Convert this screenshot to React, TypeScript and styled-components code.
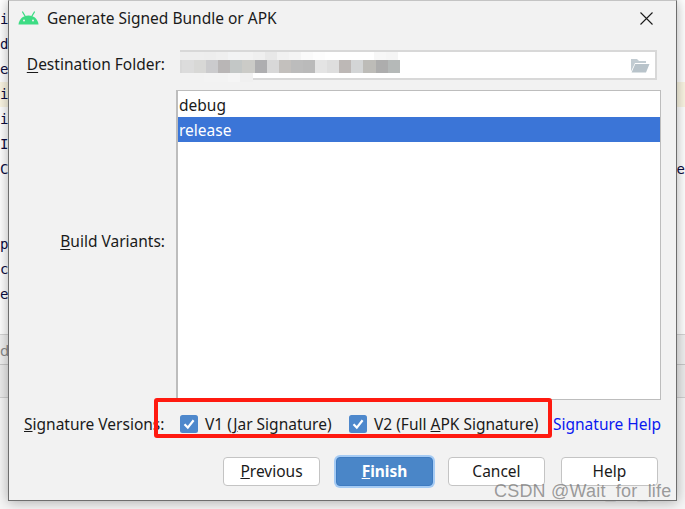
import React from "react";
import styled, { createGlobalStyle } from "styled-components";

const GlobalStyle = createGlobalStyle`
  html, body {
    margin: 0;
    padding: 0;
    background: #ffffff;
  }
`;

const uiFont = `"Noto Sans", "Open Sans", "Liberation Sans", sans-serif`;

const Screen = styled.div`
  position: relative;
  width: 685px;
  height: 509px;
  overflow: hidden;
  background: #ffffff;
  font-family: ${uiFont};
`;

/* the IDE behind the dialog */
const Backdrop = styled.div`
  display: flex;
  flex-direction: column;
  height: 100%;
`;

const Editor = styled.div`
  height: 334px;
  padding-top: 7px;
  box-sizing: border-box;
  background: #ffffff;
`;

const CodeLine = styled.div<{ $current?: boolean }>`
  height: 25px;
  line-height: 25px;
  font-family: "DejaVu Sans Mono", monospace;
  font-size: 14px;
  color: #0c0c40;
  background: ${(p) => (p.$current ? "#fbf6e3" : "transparent")};
  display: flex;
  justify-content: space-between;
`;

const Tabs = styled.div`
  height: 31px;
  background: #f0f0f0;
  border-top: 1px solid #d4d4d4;
  border-bottom: 1px solid #c8c8c8;
  line-height: 30px;
  font-size: 15px;
  color: #888888;
  box-sizing: border-box;
`;

const Toolbar = styled.div`
  height: 33px;
  background: #ececec;
  border-bottom: 1px solid #d0d0d0;
  box-sizing: border-box;
`;

const StatusArea = styled.div`
  flex: 1;
  background: #f6f6f6;
`;

const Dialog = styled.div`
  position: absolute;
  left: 8px;
  top: 0;
  width: 669px;
  height: 501px;
  box-sizing: border-box;
  background: #f2f2f2;
  border: 1px solid #6e6e6e;
  border-top-color: #c4c4c4;
  box-shadow: 0 1px 12px rgba(0, 0, 0, 0.32);
  display: flex;
  flex-direction: column;
  color: #1a1a1a;
`;

const TitleBar = styled.div`
  height: 38px;
  display: flex;
  align-items: center;
  padding: 0 23px 4px 9px;
  box-sizing: border-box;
  gap: 8px;
`;

const Title = styled.div`
  flex: 1;
  font-size: 15.5px;
  color: #1a1a1a;
`;

const Form = styled.div`
  display: grid;
  grid-template-columns: 156px 1fr;
  grid-template-rows: 30px 1fr;
  column-gap: 11px;
  row-gap: 10px;
  height: 361px;
  padding: 11px 15px 0 0;
  box-sizing: border-box;
`;

const Label = styled.label`
  font-size: 15.5px;
  color: #1a1a1a;
  text-align: right;
  align-self: center;
  white-space: nowrap;
  padding-bottom: 2px;
  u {
    text-underline-offset: 2px;
  }
`;

const BuildLabel = styled(Label)`
  padding-bottom: 8px;
`;

const PathField = styled.div`
  position: relative;
  margin: 0 4px 0 4px;
  border: 2px solid #d8d8d8;
  background: #ffffff;
  display: flex;
  align-items: center;
  justify-content: flex-end;
  padding-right: 5px;
`;

/* the pixelated patch that hides the path, it lies over the field */
const Blur = styled.div`
  position: absolute;
  left: -2px;
  top: 0;
  display: flex;
  flex-direction: column;
`;

const BlurRow = styled.div<{ $height: number; $indent: number }>`
  display: flex;
  height: ${(p) => p.$height}px;
  padding-left: ${(p) => p.$indent}px;
`;

const BlurCell = styled.span<{ $color: string }>`
  width: 12.1px;
  background: ${(p) => p.$color};
`;

const VariantList = styled.ul`
  list-style: none;
  margin: 0;
  padding: 1px 0 0;
  background: #ffffff;
  border: 1px solid #bdbdbd;
  border-left-width: 2px;
  font-size: 15.5px;
`;

const VariantRow = styled.li<{ $selected?: boolean }>`
  height: 25px;
  line-height: 27px;
  padding-left: 1px;
  background: ${(p) => (p.$selected ? "#3b75d7" : "transparent")};
  color: ${(p) => (p.$selected ? "#ffffff" : "#1a1a1a")};
`;

const SignatureRow = styled.div`
  height: 46px;
  display: flex;
  align-items: center;
  padding-left: 15px;
  margin-top: 1px;
  font-size: 15.5px;
`;

const SignatureLabel = styled.span`
  width: 156px;
  white-space: nowrap;
`;

const CheckOption = styled.span<{ $width: number }>`
  width: ${(p) => p.$width}px;
  display: flex;
  align-items: center;
  gap: 7px;
  white-space: nowrap;
`;

const CheckBox = styled.svg`
  width: 18px;
  height: 18px;
  flex: none;
  margin-top: -1px;
`;

const HelpLink = styled.a`
  color: #0a19f0;
  white-space: nowrap;
`;

const Buttons = styled.div`
  display: flex;
  justify-content: flex-end;
  gap: 16px;
  padding: 10px 18px 0 0;
`;

const DialogButton = styled.button<{ $primary?: boolean }>`
  width: 97px;
  height: 29px;
  margin: 0 ${(p) => (p.$primary ? "-1px" : "0")} 0 0;
  padding: 0 0 2px;
  border-radius: 4px;
  font-family: ${uiFont};
  font-size: 15.5px;
  border: 1px solid ${(p) => (p.$primary ? "#3f7cc1" : "#c4c4c4")};
  background: ${(p) => (p.$primary ? "#4a86c8" : "#ffffff")};
  color: ${(p) => (p.$primary ? "#ffffff" : "#1a1a1a")};
  font-weight: ${(p) => (p.$primary ? 700 : 400)};
  box-shadow: ${(p) => (p.$primary ? "0 0 0 2px #a5cbf4" : "none")};
`;

const RedBox = styled.div`
  position: absolute;
  left: 154px;
  top: 398px;
  width: 398px;
  height: 40px;
  box-sizing: border-box;
  border: 4px solid #ff1a10;
  border-radius: 3px;
  pointer-events: none;
`;

const Watermark = styled.div`
  position: absolute;
  left: 494px;
  top: 481px;
  font-family: "Liberation Sans", sans-serif;
  font-size: 18px;
  letter-spacing: 0.2px;
  color: rgba(110, 110, 110, 0.68);
  white-space: nowrap;
`;

const AndroidLogo = () => (
  <svg width="21" height="14" viewBox="0 0 21 14" style={{ flex: "none" }}>
    <path d="M0.5 13.5C1 8.5 4.8 4.6 10.5 4.6S20 8.5 20.5 13.5Z" fill="#3ddc84" />
    <path d="M4.6 1 7 5M16.4 1 14 5" stroke="#3ddc84" strokeWidth="1.3" strokeLinecap="round" />
    <circle cx="6" cy="9.6" r="1" fill="#f2f2f2" />
    <circle cx="15" cy="9.6" r="1" fill="#f2f2f2" />
  </svg>
);

const CloseIcon = () => (
  <svg width="13" height="13" viewBox="0 0 13 13">
    <path d="M.5.5l12 12M12.5.5l-12 12" stroke="#1a1a1a" strokeWidth="1.1" fill="none" />
  </svg>
);

const FolderIcon = () => (
  <svg width="20" height="15" viewBox="0 0 20 15">
    <path d="M1 13.5V1h6l2 2h7v2H5L1 13.5Z" fill="#c2ccd2" />
    <path d="M5.2 6H19.5L16 14.5H1.6Z" fill="#b8c3ca" />
  </svg>
);

const Check = () => (
  <CheckBox viewBox="0 0 18 18">
    <rect width="18" height="18" rx="2.5" fill="#4e88cc" />
    <path d="M4.5 9.2 7.8 12.6 13.6 5.2" stroke="#ffffff" strokeWidth="2.2" fill="none" />
  </CheckBox>
);

const blurTop = [
  "#eeeeee", "#eeeeee", "#ededed", "#efefef", "#f2f3f4", "#f2f2f2", "#efefef", "#e8e8e8", "#f1f1f1", "#f4f4f4",
  "#fafafa", "#fdfdfd", "#ffffff", "#ffffff", "#ffffff", "#ffffff", "#f7f7f7", "#f5f5f5",
];
const blurMain = [
  "#dcdcdc", "#d8d8d6", "#cbcbcd", "#b9b6b6", "#c3c7c6", "#cbcbc7", "#aeaeb0", "#d8d8d8", "#c3c0bd", "#bcbcbc",
  "#bababa", "#e4e4e4", "#dedede", "#bdb8b6", "#d3d5d6", "#bdbcb8", "#adadad", "#b5b9b8",
];
const blurBottom = ["#f2f2f2", "#f2f2f2", "#f3f3f3", "#f3f3f3", "#f5f5f5", "#f0f0f0"];

const leftChars = ["i", "d", "e", "i", "i", "I", "C", "", "", "p", "c", "e"];

export default function App() {
  return (
    <Screen>
      <GlobalStyle />
      <Backdrop>
        <Editor>
          {leftChars.map((c, i) => (
            <CodeLine key={i} $current={i === 3}>
              <span>{c}</span>
              <span>{i === 6 ? "e" : ""}</span>
            </CodeLine>
          ))}
        </Editor>
        <Tabs>de</Tabs>
        <Toolbar />
        <StatusArea />
      </Backdrop>

      <Dialog>
        <TitleBar>
          <AndroidLogo />
          <Title>Generate Signed Bundle or APK</Title>
          <CloseIcon />
        </TitleBar>

        <Form>
          <Label>
            <u>D</u>estination Folder:
          </Label>
          <PathField>
            <Blur>
              <BlurRow $height={8} $indent={0}>
                {blurTop.map((c, i) => (
                  <BlurCell key={i} $color={c} />
                ))}
              </BlurRow>
              <BlurRow $height={13} $indent={2}>
                {blurMain.map((c, i) => (
                  <BlurCell key={i} $color={c} />
                ))}
              </BlurRow>
              <BlurRow $height={9} $indent={0}>
                {blurBottom.map((c, i) => (
                  <BlurCell key={i} $color={c} />
                ))}
              </BlurRow>
            </Blur>
            <FolderIcon />
          </PathField>
          <BuildLabel>
            <u>B</u>uild Variants:
          </BuildLabel>
          <VariantList>
            <VariantRow>debug</VariantRow>
            <VariantRow $selected>release</VariantRow>
          </VariantList>
        </Form>

        <SignatureRow>
          <SignatureLabel>
            <u>S</u>ignature Versions:
          </SignatureLabel>
          <CheckOption $width={169}>
            <Check />
            <span>
              V1 (<u>J</u>ar Signature)
            </span>
          </CheckOption>
          <CheckOption $width={204}>
            <Check />
            <span>
              V2 (Full <u>A</u>PK Signature)
            </span>
          </CheckOption>
          <HelpLink>Signature Help</HelpLink>
        </SignatureRow>

        <Buttons>
          <DialogButton>
            <u>P</u>revious
          </DialogButton>
          <DialogButton $primary>
            <u>F</u>inish
          </DialogButton>
          <DialogButton>Cancel</DialogButton>
          <DialogButton>Help</DialogButton>
        </Buttons>
      </Dialog>

      <RedBox />
      <Watermark>CSDN @Wait_for_life</Watermark>
    </Screen>
  );
}
